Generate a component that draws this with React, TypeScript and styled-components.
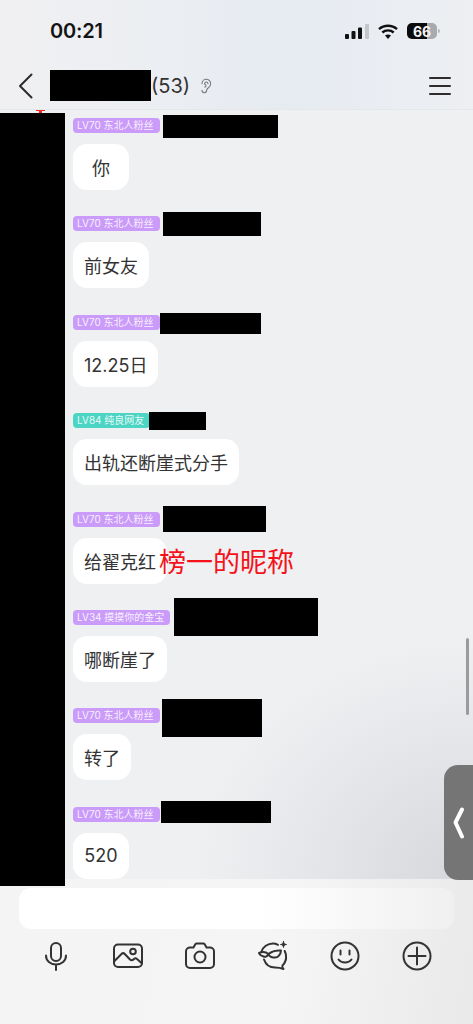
import React from "react";
import styled, { createGlobalStyle } from "styled-components";
import { Ear } from "lucide-react";

const Global = createGlobalStyle`
  html, body { margin: 0; padding: 0; background: #eef0f2; }
  * { box-sizing: border-box; }
`;

const FONT = `Inter, "Noto Sans CJK SC", sans-serif`;

const Page = styled.div`
  position: relative;
  width: 473px;
  height: 1024px;
  overflow: hidden;
  display: flex;
  flex-direction: column;
  font-family: ${FONT};
  background: #eef0f2;
`;

const Header = styled.header`
  height: 110px;
  flex: none;
  display: flex;
  flex-direction: column;
  border-bottom: 1px solid #e6e7ea;
  background: linear-gradient(90deg, #f0f0f2 0%, #ebeef2 35%, #e6ebf2 60%, #edeff2 100%);
`;

const StatusBar = styled.div`
  height: 62px;
  flex: none;
  display: flex;
  align-items: center;
  justify-content: space-between;
  padding: 0 32px 0 50px;
`;

const Time = styled.span`
  font-size: 20px;
  font-weight: 600;
  color: #141414;
  letter-spacing: -0.2px;
`;

const StatusIcons = styled.div`
  display: flex;
  align-items: center;
  gap: 9px;
`;

const Battery = styled.div`
  position: relative;
  width: 30px;
  height: 16px;
  border-radius: 5px;
  background: linear-gradient(90deg, #0c0c0c 0 68%, #a9aaac 68% 100%);
  display: flex;
  align-items: center;
  justify-content: center;
  margin-right: 4px;
  color: #f4f4f4;
  font-size: 14px;
  font-weight: 700;
  &::after {
    content: "";
    position: absolute;
    right: -3px;
    top: 6px;
    width: 2px;
    height: 4px;
    border-radius: 0 2px 2px 0;
    background: #b4b5b7;
  }
`;

const Nav = styled.div`
  flex: 1;
  display: flex;
  align-items: center;
  padding: 0 22px 0 18px;
`;

const BackButton = styled.div`
  width: 16px;
  height: 26px;
  display: flex;
  margin-right: 16px;
`;

const Redact = styled.div<{ $w: number; $h: number; $top?: number; $left?: number }>`
  flex: none;
  width: ${(p) => p.$w}px;
  height: ${(p) => p.$h}px;
  margin-top: ${(p) => p.$top ?? 0}px;
  margin-left: ${(p) => p.$left ?? 0}px;
  background: #000;
`;

const Count = styled.span`
  font-size: 20px;
  color: #333;
`;

const EarMark = styled.div`
  display: flex;
  margin-left: 8px;
  color: #77787b;
`;

const Menu = styled.div`
  display: flex;
  margin-left: auto;
`;

const RedTick = styled.div`
  position: absolute;
  left: 36px;
  top: 110px;
  width: 9px;
  height: 3px;
  background: linear-gradient(180deg, #f02a22 0 1px, transparent 1px),
    linear-gradient(90deg, transparent 3px, #f02a22 3px 6px, transparent 6px);
`;

const SidePanel = styled.div`
  position: absolute;
  left: 0;
  top: 113px;
  width: 65px;
  height: 773px;
  background: #000;
  z-index: 2;
`;

const Chat = styled.main`
  flex: 1;
  overflow: hidden;
  padding: 8px 0 0 73px;
  background: radial-gradient(ellipse 280px 240px at 100% 100%, #d6d7da 0%, #e3e4e7 50%, rgba(238, 240, 242, 0) 100%), #eef0f2;
`;

const Message = styled.article`
  position: relative;
  margin-bottom: 26.4px;
`;

const Meta = styled.div`
  display: flex;
  align-items: flex-start;
  height: 15px;
  margin-bottom: 11px;
`;

const Badge = styled.span<{ $tone: "purple" | "teal" }>`
  flex: none;
  height: 15px;
  padding: 0 6px 0 4px;
  border-radius: 4px;
  background: ${(p) => (p.$tone === "teal" ? "#4dd5c4" : "#ca9bf9")};
  color: rgba(255, 255, 255, 0.88);
  font-size: 10px;
  line-height: 15px;
  white-space: nowrap;
`;

const Bubble = styled.div`
  display: inline-flex;
  align-items: center;
  justify-content: center;
  min-width: 56px;
  height: 46px;
  padding: 0 11px;
  border-radius: 14px;
  background: #fff;
  color: #333;
  font-size: 18px;
  vertical-align: top;
`;

const Annotation = styled.span`
  position: absolute;
  left: 86px;
  top: 33px;
  font-size: 27px;
  line-height: 36px;
  color: #f5121a;
  white-space: nowrap;
`;

const ScrollThumb = styled.div`
  position: absolute;
  left: 466px;
  top: 638px;
  width: 3px;
  height: 77px;
  border-radius: 2px;
  background: #9a9b9d;
`;

const Handle = styled.div`
  position: absolute;
  left: 444px;
  top: 765px;
  width: 29px;
  height: 115px;
  border-radius: 14px 0 0 14px;
  background: #757575;
  display: flex;
  align-items: center;
  padding-left: 8px;
`;

const Footer = styled.footer`
  height: 145px;
  flex: none;
  padding: 9px 19px 0;
  background: linear-gradient(100deg, #f4f4f4 0%, #f5f5f5 60%, #e9e9e9 100%);
`;

const InputBox = styled.div`
  height: 41px;
  border-radius: 12px;
  background: linear-gradient(90deg, #ffffff 0%, #ffffff 55%, #f0f0f0 100%);
`;

const Tools = styled.div`
  display: grid;
  grid-template-columns: repeat(6, 1fr);
  margin: 11px 1px 0;
`;

const Tool = styled.div`
  display: flex;
  justify-content: center;
  align-items: center;
  height: 32px;
`;

const ToolSvg = styled.svg.attrs({
  width: 32,
  height: 32,
  viewBox: "0 0 32 32",
  fill: "none",
  stroke: "#333",
  strokeWidth: 2,
  strokeLinecap: "round",
  strokeLinejoin: "round",
})``;

const rows = [
  { tone: "purple", lv: "LV70 东北人粉丝", text: "你", w: 115, h: 23, top: -3, left: 3 },
  { tone: "purple", lv: "LV70 东北人粉丝", text: "前女友", w: 98, h: 24, top: -4, left: 3 },
  { tone: "purple", lv: "LV70 东北人粉丝", text: "12.25日", w: 101, h: 21, top: -2, left: 0 },
  { tone: "teal", lv: "LV84 纯良网友", text: "出轨还断崖式分手", w: 57, h: 18, top: -1, left: -1 },
  { tone: "purple", lv: "LV70 东北人粉丝", text: "给翟克红", w: 103, h: 26, top: -6, left: 3, note: "榜一的昵称" },
  { tone: "purple", lv: "LV34 摸摸你的金宝", text: "哪断崖了", w: 144, h: 38, top: -12, left: 4 },
  { tone: "purple", lv: "LV70 东北人粉丝", text: "转了", w: 100, h: 38, top: -9, left: 2 },
  { tone: "purple", lv: "LV70 东北人粉丝", text: "520", w: 110, h: 22, top: -6, left: 1 },
] as const;

export default function App() {
  return (
    <Page>
      <Global />
      <Header>
        <StatusBar>
          <Time>00:21</Time>
          <StatusIcons>
            <svg width="24" height="15" viewBox="0 0 24 15">
              <rect x="0" y="10" width="4" height="5" rx="1" fill="#111" />
              <rect x="6.5" y="7" width="4" height="8" rx="1" fill="#111" />
              <rect x="13" y="3.5" width="4" height="11.5" rx="1" fill="#111" />
              <rect x="20" y="0" width="4" height="15" rx="1" fill="#c4c6c9" />
            </svg>
            <svg width="20" height="15" viewBox="0 0 20 15" fill="none" stroke="#111" strokeLinecap="butt">
              <path d="M1 5.2C6 .6 14 .6 19 5.2" strokeWidth="2.4" />
              <path d="M4.3 8.5c3.2-2.9 8.2-2.9 11.4 0" strokeWidth="2.4" />
              <path d="M10 15l-3-3.4c1.7-1.4 4.3-1.4 6 0z" fill="#111" stroke="none" />
            </svg>
            <Battery>66</Battery>
          </StatusIcons>
        </StatusBar>
        <Nav>
          <BackButton>
            <svg width="16" height="26" viewBox="0 0 16 26" fill="none" stroke="#2c2c2c" strokeWidth="2" strokeLinecap="round" strokeLinejoin="round">
              <path d="M13.5 1.5 2 13l11.5 11.5" />
            </svg>
          </BackButton>
          <Redact $w={101} $h={31} />
          <Count>(53)</Count>
          <EarMark>
            <Ear size={16} strokeWidth={1.6} />
          </EarMark>
          <Menu>
            <svg width="22" height="18" viewBox="0 0 22 18" stroke="#2c2c2c" strokeWidth="2" strokeLinecap="round">
              <path d="M1 1h20M1 9h20M1 17h20" />
            </svg>
          </Menu>
        </Nav>
      </Header>

      <Chat>
        {rows.map((r, i) => (
          <Message key={i}>
            <Meta>
              <Badge $tone={r.tone}>{r.lv}</Badge>
              <Redact $w={r.w} $h={r.h} $top={r.top} $left={r.left} />
            </Meta>
            <Bubble>{r.text}</Bubble>
            {"note" in r && <Annotation>{r.note}</Annotation>}
          </Message>
        ))}
      </Chat>

      <Footer>
        <InputBox />
        <Tools>
          <Tool>
            <ToolSvg>
              <rect x="11" y="3" width="10" height="18" rx="5" />
              <path d="M6 15.5c0 5.5 4.4 9 10 9s10-3.500 10-9M16 24.500V30" />
            </ToolSvg>
          </Tool>
          <Tool>
            <ToolSvg>
              <rect x="2" y="4.500" width="28" height="22.500" rx="4" />
              <circle cx="21" cy="11.500" r="2.800" />
              <path d="M2.500 21l7-7c1-1 2.300-1 3.300 0l5.200 5.500c1.500 1.500 3 .5 4-.5 1-1 2-1 3 0l4.500 4" />
            </ToolSvg>
          </Tool>
          <Tool>
            <ToolSvg>
              <path d="M6 7.500h3.500l1.800-3.200c.3-.5.8-.8 1.400-.8h6.600c.6 0 1.100.3 1.400.8L22.500 7.500H26c2.200 0 4 1.800 4 4V24c0 2.200-1.800 4-4 4H6c-2.200 0-4-1.800-4-4V11.500c0-2.200 1.800-4 4-4z" />
              <circle cx="16" cy="17" r="5.500" />
            </ToolSvg>
          </Tool>
          <Tool>
            <ToolSvg>
              <path d="M21 4.800C19.500 4 17.800 3.500 16 3.500 10.500 3.500 6 7 4.500 11.500" />
              <path d="M2 13c3.500-1.500 7-1 9.500 1 2.500-2 8-4 12.500-3.500-.3 4-3 7.500-6.500 7-3 .5-5.500-1.500-6-3.500-1 2-3 3.500-5 2.500-2.500-.8-4-2-4.500-3.500z" />
              <path d="M7 19.500c1.500 4.500 5.500 8 11 8 2.500 0 6 .5 8.500 1.500-1-1-1.500-2.500-1-3.500 2.500-2.500 4-6 3.500-10-.1-1.500-.6-3-1.300-4.500" />
              <path d="M26.500 1.500c.3 2 1 2.700 3 3-2 .3-2.700 1-3 3-.3-2-1-2.700-3-3 2-.3 2.700-1 3-3z" fill="#333" strokeWidth="1" />
            </ToolSvg>
          </Tool>
          <Tool>
            <ToolSvg>
              <circle cx="16" cy="16" r="13.500" />
              <path d="M11.500 10.500v4M20.500 10.500v4" />
              <path d="M9.500 19.500c3 4 10 4 13 0" />
            </ToolSvg>
          </Tool>
          <Tool>
            <ToolSvg>
              <circle cx="16" cy="16" r="13.500" />
              <path d="M7.500 16h17M16 7.500v17" />
            </ToolSvg>
          </Tool>
        </Tools>
      </Footer>

      <RedTick />
      <SidePanel />
      <ScrollThumb />
      <Handle>
        <svg width="13" height="32" viewBox="0 0 13 32" fill="none" stroke="#fff" strokeWidth="4" strokeLinecap="round" strokeLinejoin="round">
          <path d="M10 2.500 3.500 15.500 10 29.500" />
        </svg>
      </Handle>
    </Page>
  );
}
